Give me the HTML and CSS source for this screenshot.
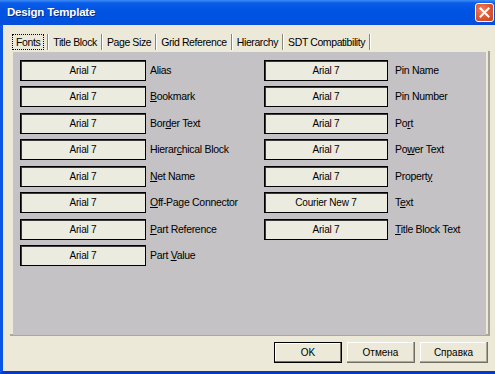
FILE: index.html
```html
<!DOCTYPE html>
<html lang="en">
<head>
    <meta charset="UTF-8">
    <title>Design Template</title>
    <link rel="stylesheet" href="styles.css">
</head>
<body>

<div class="window">
    <div class="titlebar">
        <span class="title">Design Template</span>
        <button class="close-btn" aria-label="Close">
            <svg width="11" height="11" viewBox="0 0 11 11">
                <path d="M1.5 1.5 L9.5 9.5 M9.5 1.5 L1.5 9.5" stroke="#fff" stroke-width="2" stroke-linecap="square"/>
            </svg>
        </button>
    </div>

    <div class="dialog">
        <div class="tabs">
            <div class="tab active"><span class="focus">Fonts</span></div>
            <div class="tab">Title Block</div>
            <div class="tab">Page Size</div>
            <div class="tab">Grid Reference</div>
            <div class="tab">Hierarchy</div>
            <div class="tab">SDT Compatibility</div>
        </div>

        <div class="tab-page">
            <div class="panel">
                <div class="column left">
                    <div class="row"><button class="font-btn">Arial 7</button><span class="label">Alias</span></div>
                    <div class="row"><button class="font-btn">Arial 7</button><span class="label"><u>B</u>ookmark</span></div>
                    <div class="row"><button class="font-btn">Arial 7</button><span class="label">Bor<u>d</u>er Text</span></div>
                    <div class="row"><button class="font-btn">Arial 7</button><span class="label">Hierar<u>c</u>hical Block</span></div>
                    <div class="row"><button class="font-btn">Arial 7</button><span class="label"><u>N</u>et Name</span></div>
                    <div class="row"><button class="font-btn">Arial 7</button><span class="label"><u>O</u>ff-Page Connector</span></div>
                    <div class="row"><button class="font-btn">Arial 7</button><span class="label"><u>P</u>art Reference</span></div>
                    <div class="row"><button class="font-btn">Arial 7</button><span class="label">Part <u>V</u>alue</span></div>
                </div>
                <div class="column right">
                    <div class="row"><button class="font-btn">Arial 7</button><span class="label">Pin Name</span></div>
                    <div class="row"><button class="font-btn">Arial 7</button><span class="label">Pin Number</span></div>
                    <div class="row"><button class="font-btn">Arial 7</button><span class="label">Po<u>r</u>t</span></div>
                    <div class="row"><button class="font-btn">Arial 7</button><span class="label">Po<u>w</u>er Text</span></div>
                    <div class="row"><button class="font-btn">Arial 7</button><span class="label">Propert<u>y</u></span></div>
                    <div class="row"><button class="font-btn">Courier New 7</button><span class="label">T<u>e</u>xt</span></div>
                    <div class="row"><button class="font-btn">Arial 7</button><span class="label"><u>T</u>itle Block Text</span></div>
                </div>
            </div>
        </div>

        <div class="actions">
            <button class="btn default">OK</button>
            <button class="btn">Отмена</button>
            <button class="btn">Справка</button>
        </div>
    </div>
</div>

</body>
</html>
```

FILE: styles.css
```css
body {
    margin: 0;
    padding: 0;
    font-family: "Liberation Sans", Arial, sans-serif;
    font-size: 11px;
    color: #000;
    overflow: hidden;
}
.window {
    width: 492px;
    height: 371px;
    display: flex;
    flex-direction: column;
    background-color: #ece9d8;
    border-left: 3px solid #0a56e6;
    border-bottom: 3px solid #0838c8;
}
.titlebar {
    height: 25px;
    margin-left: -3px;
    padding-left: 7px;
    display: flex;
    align-items: center;
    justify-content: space-between;
    background: linear-gradient(to bottom, #3d8df5 0, #0a5dea 3px, #0054e3 10px, #0052e0 20px, #0a4fd8 100%);
}
.title {
    color: white;
    font-weight: bold;
    font-size: 11.5px;
    letter-spacing: -0.2px;
    text-shadow: 1px 1px #0a2c8c;
    padding-bottom: 1px;
}
.close-btn {
    width: 19px;
    height: 19px;
    margin-right: 1px;
    padding: 0;
    display: flex;
    align-items: center;
    justify-content: center;
    border: 1px solid #fff;
    border-radius: 3px;
    background: radial-gradient(circle at 35% 35%, #f0826a 0, #e05a36 45%, #c2421c 100%);
}
.dialog {
    flex: 1;
    display: flex;
    flex-direction: column;
    padding: 8px 4px 0 7px;
}
.tabs {
    display: flex;
    height: 18px;
    padding-left: 2px;
}
.tab {
    height: 16px;
    margin-top: 1px;
    padding: 0 4px;
    line-height: 16px;
    font-size: 10.5px;
    letter-spacing: -0.4px;
    border-right: 1px solid #8a877a;
    box-shadow: 1px 0 #fff;
    margin-right: 1px;
}
.tab.active {
    padding: 0 3px 0 0;
}
.focus {
    display: inline-block;
    height: 14px;
    line-height: 14px;
    padding: 0 3px;
    border: 1px dotted #000;
}
.tab-page {
    width: 473px;
    height: 282px;
    padding: 1px 2px 0 3px;
    border-right: 2px solid #a7a496;
    border-bottom: 2px solid #aca899;
}
.panel {
    height: 275px;
    padding: 8px 0 0 7px;
    display: grid;
    grid-template-columns: 244px 1fr;
    background-color: #c4c2c5;
}
.column {
    display: flex;
    flex-direction: column;
    gap: 5.43px;
}
.row {
    display: flex;
    align-items: flex-start;
}
.font-btn {
    width: 126px;
    height: 21px;
    padding: 0;
    font-family: "Liberation Sans", Arial, sans-serif;
    font-size: 10px;
    letter-spacing: -0.2px;
    color: #000;
    background-color: #ecebe0;
    border: 1px solid #000;
    box-shadow: inset 1px 1px #3a3a3a;
}
.label {
    margin-left: 4px;
    padding-top: 4px;
    font-size: 10.5px;
    letter-spacing: -0.3px;
}
.column.right .font-btn {
    width: 124px;
}
.column.right .label {
    margin-left: 7px;
}
.actions {
    display: flex;
    justify-content: flex-end;
    gap: 5px;
    padding: 6px 3px 0 0;
}
.btn {
    width: 68px;
    height: 21px;
    padding: 0;
    font-family: "Liberation Sans", Arial, sans-serif;
    font-size: 10px;
    color: #000;
    background-color: #ece9d8;
    border: none;
    border-right: 1px solid #716f64;
    border-bottom: 1px solid #716f64;
    box-shadow: inset -1px -1px #aca899, inset 1px 1px #fff;
}
.btn.default {
    border: 1px solid #000;
    box-shadow: inset -1px -1px #716f64, inset 1px 1px #fff;
}
```
